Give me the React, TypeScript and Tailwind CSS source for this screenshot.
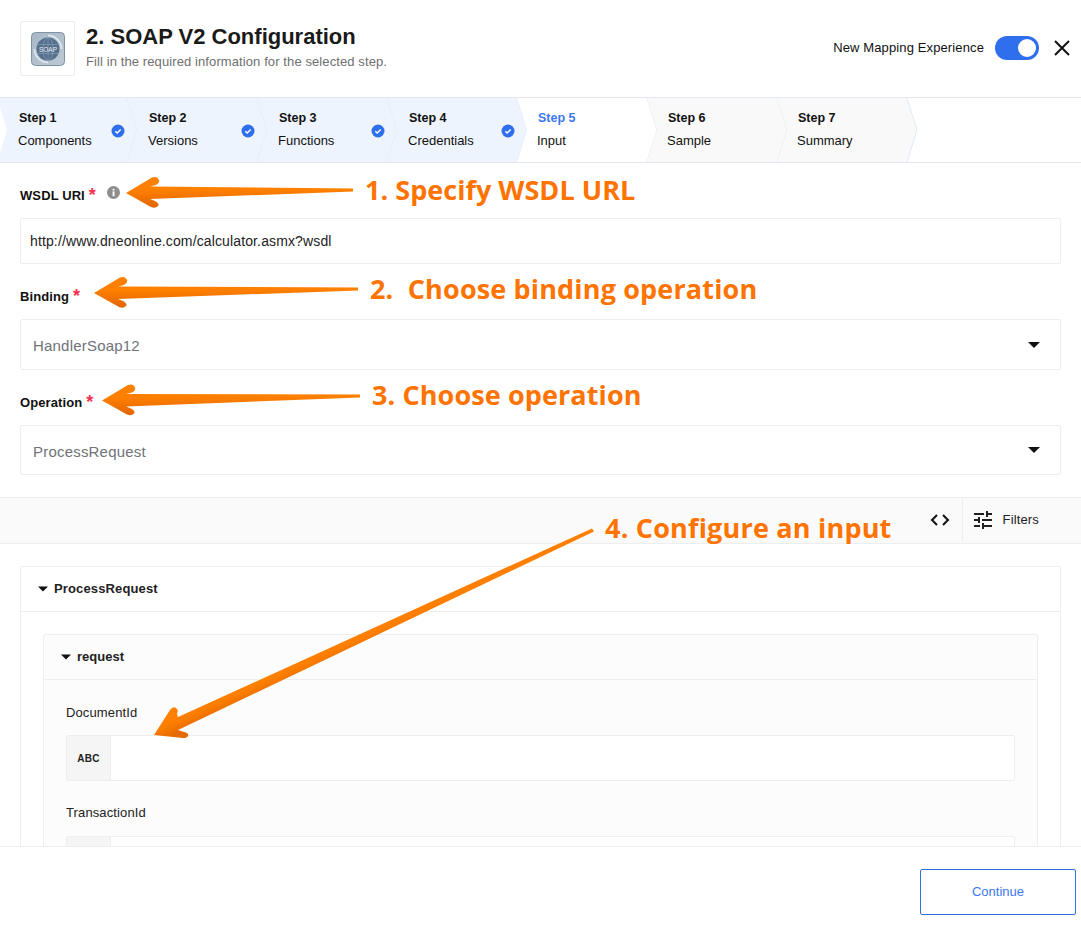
import { MdTune } from "react-icons/md";

const steps = [
  { n: "Step 1", name: "Components", state: "done" },
  { n: "Step 2", name: "Versions", state: "done" },
  { n: "Step 3", name: "Functions", state: "done" },
  { n: "Step 4", name: "Credentials", state: "done" },
  { n: "Step 5", name: "Input", state: "current" },
  { n: "Step 6", name: "Sample", state: "todo" },
  { n: "Step 7", name: "Summary", state: "todo" },
];

const stepFill: Record<string, string> = { done: "#eef4fd", current: "#ffffff", todo: "#f9f9f9" };

function Caret({ className }: { className?: string }) {
  return (
    <svg width="10" height="6" viewBox="0 0 10 6" className={className}>
      <path d="M0 0.5h10L5 5.5z" fill="#111" />
    </svg>
  );
}

function Star() {
  return <span className="text-[#f5304f] text-[18px] leading-none ml-[4px] font-bold relative top-[-1px]">*</span>;
}

function SoapLogo() {
  return (
    <svg width="34" height="34" viewBox="0 0 34 34">
      <defs>
        <linearGradient id="soapbg" x1="0" y1="0" x2="1" y2="1">
          <stop offset="0" stopColor="#a9b8c6" />
          <stop offset="1" stopColor="#bcc9d4" />
        </linearGradient>
      </defs>
      <rect x="0.5" y="0.5" width="33" height="33" rx="4" fill="url(#soapbg)" stroke="#7f92a5" />
      <path d="M17 3.5a13.5 13.5 0 0 1 13.5 13.5M17 30.5A13.5 13.5 0 0 1 3.5 17" fill="none" stroke="#e6ecf1" strokeWidth="1.5" />
      <circle cx="17" cy="17" r="11.5" fill="#556f8d" />
      <g fill="none" stroke="#86a0b8" strokeWidth="0.7">
        <ellipse cx="17" cy="17" rx="5" ry="11.5" />
        <path d="M17 5.5v23M6 12.5h22M6 21.5h22" />
      </g>
      <text x="17" y="19.5" textAnchor="middle" fontSize="6.5" fill="#e8edf2" fontFamily="Liberation Sans, sans-serif">SOAP</text>
    </svg>
  );
}

// left-pointing callout arrow, rounded barbs, shaft tapers to a blunt tail
function arrowPath(tx: number, ty: number, ex: number, ey: number) {
  return `M${tx} ${ty} L${tx + 26} ${ty - 15.5} Q${tx + 31} ${ty - 17.5} ${tx + 33} ${ty - 13} Q${tx + 34} ${ty - 10} ${tx + 30} ${ty - 8} L${tx + 24} ${ty - 6.5} L${ex} ${ey - 1.5} L${ex} ${ey + 1.5} L${tx + 24} ${ty + 6} L${tx + 29} ${ty + 8} Q${tx + 34} ${ty + 11} ${tx + 32} ${ty + 13} Q${tx + 29} ${ty + 16} ${tx + 25} ${ty + 14} Z`;
}

function Annotations() {
  return (
    <>
      <svg className="absolute left-0 top-0 pointer-events-none" width="1081" height="934" viewBox="0 0 1081 934">
        <defs>
          <linearGradient id="arrowFill" x1="0" y1="0" x2="0" y2="1">
            <stop offset="0.4" stopColor="#ff8000" />
            <stop offset="1" stopColor="#e06500" />
          </linearGradient>
          <linearGradient id="arrowFillDiag" gradientUnits="userSpaceOnUse" x1="174" y1="714" x2="182" y2="732">
            <stop offset="0.3" stopColor="#ff8000" />
            <stop offset="1" stopColor="#e56a00" />
          </linearGradient>
        </defs>
        <path d={arrowPath(126, 193, 353, 190)} fill="url(#arrowFill)" />
        <path d={arrowPath(94, 293, 358, 289)} fill="url(#arrowFill)" />
        <path d={arrowPath(102, 400.5, 360, 396)} fill="url(#arrowFill)" />
        <path
          d="M154 735 L170 710 Q173 706 176 708 Q179 710 177 714 L178 717 L592 528.5 L594 531.5 L178 730 L184 732 Q189 733 188 736 Q187 738 183 738 Z"
          fill="url(#arrowFillDiag)"
        />
      </svg>
      <div className="absolute left-[365px] top-[171px] text-[27px] leading-[38px] font-bold tracking-[0.03px] text-[#ff7300] [font-family:'Open_Sans',sans-serif] whitespace-nowrap">1. Specify WSDL URL</div>
      <div className="absolute left-[370px] top-[270px] text-[27px] leading-[38px] font-bold tracking-[0.15px] text-[#ff7300] [font-family:'Open_Sans',sans-serif] whitespace-pre">2.  Choose binding operation</div>
      <div className="absolute left-[372px] top-[376px] text-[27px] leading-[38px] font-bold tracking-[0.1px] text-[#ff7300] [font-family:'Open_Sans',sans-serif] whitespace-nowrap">3. Choose operation</div>
      <div className="absolute left-[605px] top-[509px] text-[27px] leading-[38px] font-bold tracking-[0.2px] text-[#ff7300] [font-family:'Open_Sans',sans-serif] whitespace-nowrap">4. Configure an input</div>
    </>
  );
}

function SelectBox({ value, className }: { value: string; className: string }) {
  return (
    <div className={`mx-5 border border-[#eeeeee] rounded-[2px] flex items-center justify-between pl-[12px] pr-[20px] text-[15px] tracking-[0.2px] text-[#6f7378] ${className}`}>
      <span className="mt-[4px]">{value}</span>
      <svg width="12" height="6" viewBox="0 0 12 6">
        <path d="M0 0h12L6 6z" fill="#111" />
      </svg>
    </div>
  );
}

function AbcField({ tag }: { tag?: string }) {
  return (
    <div className="h-[46px] shrink-0 flex border border-[#eeeeee] rounded-[2px] bg-white">
      <div className="w-[44px] bg-[#f5f5f5] border-r border-[#eeeeee] flex items-center justify-center text-[10px] font-bold tracking-[0.2px] text-[#222]">{tag}</div>
    </div>
  );
}

export default function App() {
  return (
    <div className="relative w-[1081px] h-[934px] overflow-hidden bg-white flex flex-col text-[#111] [font-family:'Liberation_Sans',Arial,sans-serif]">
      <header className="h-[97px] shrink-0 flex justify-between pl-5 pr-[11px] pt-[21px]">
        <div className="flex gap-[11px]">
          <div className="w-[55px] h-[55px] border border-[#eeeeee] rounded-[2px] flex items-center justify-center">
            <SoapLogo />
          </div>
          <div>
            <h1 className="text-[22px] leading-[30px] font-bold mt-[1px] text-[#1a1a1a]">2. SOAP V2 Configuration</h1>
            <p className="text-[13px] tracking-[0.1px] leading-[16px] mt-[2px] text-[#6f6f6f]">Fill in the required information for the selected step.</p>
          </div>
        </div>
        <div className="flex items-center h-[54px] self-start">
          <span className="text-[13px] tracking-[0.12px] mr-[11px]">New Mapping Experience</span>
          <div className="w-[44px] h-[24px] rounded-full bg-[#2f6fed] flex items-center justify-end pr-[3px] mr-[15px]">
            <div className="w-[18px] h-[18px] rounded-full bg-white" />
          </div>
          <svg width="16" height="16" viewBox="0 0 16 16">
            <path d="M1 1l14 14M15 1L1 15" stroke="#111" strokeWidth="2" />
          </svg>
        </div>
      </header>

      <nav className="h-[66px] shrink-0 border-y border-[#e3e8f0] flex pl-0 ml-[-3px]">
        {steps.map((s, i) => (
          <div key={s.n} className="relative w-[130px] h-[64px] shrink-0">
            <svg className="absolute left-0 top-0" width="141" height="64" viewBox="0 0 141 64">
              <path d="M0 0H130L140 32L130 64H0L10 32Z" fill={stepFill[s.state]} />
              <path d="M130 0L140 32L130 64" fill="none" stroke="#e1e8f5" />
            </svg>
            <div className={`absolute top-[12px] text-[13px] leading-[16px] ${i >= 4 ? "left-[20px]" : "left-[21px]"}`}>
              <div className={`ml-[1px] font-bold text-[12.5px] ${s.state === "current" ? "text-[#3b78f0]" : "text-[#111]"}`}>{s.n}</div>
              <div className="mt-[7px] text-[#111]">{s.name}</div>
            </div>
            {s.state === "done" && (
              <svg className="absolute left-[114px] top-[26px]" width="14" height="14" viewBox="0 0 14 14">
                <circle cx="7" cy="7" r="6.5" fill="#2f6fed" />
                <path d="M4.3 7.2l1.9 1.8 3.5-3.6" fill="none" stroke="#fff" strokeWidth="1.4" />
              </svg>
            )}
          </div>
        ))}
      </nav>

      <main className="flex-1 min-h-0 overflow-hidden flex flex-col">
        <div className="h-[55px] shrink-0 mx-5 flex items-end pb-[13px] text-[13px] tracking-[0.1px] leading-[18px] font-bold">
          WSDL URI
          <Star />
          <svg className="ml-[11px] mb-[6px]" width="13" height="13" viewBox="0 0 13 13">
            <circle cx="6.5" cy="6.5" r="6.5" fill="#8d8d8d" />
            <rect x="5.6" y="5.4" width="1.9" height="4.8" fill="#fff" />
            <rect x="5.6" y="2.8" width="1.9" height="1.7" fill="#fff" />
          </svg>
        </div>
        <div className="mx-5 h-[46px] shrink-0 border border-[#eeeeee] rounded-[2px] flex items-center pl-[9px] text-[14px] tracking-[0.13px] text-[#222]">
          http://www.dneonline.com/calculator.asmx?wsdl
        </div>
        <div className="h-[55px] shrink-0 mx-5 flex items-end pb-[13px] text-[13px] tracking-[0.1px] leading-[18px] font-bold">
          Binding
          <Star />
        </div>
        <SelectBox value="HandlerSoap12" className="h-[51px] shrink-0" />
        <div className="h-[55px] shrink-0 mx-5 flex items-end pb-[13px] text-[13px] tracking-[0.1px] leading-[18px] font-bold">
          Operation
          <Star />
        </div>
        <SelectBox value="ProcessRequest" className="h-[50px] shrink-0" />

        <div className="mt-[22px] h-[47px] shrink-0 bg-[#fafafa] border-y border-[#eeeeee] flex items-center justify-end pb-[1px]">
          <svg className="mr-[12px]" width="20" height="14" viewBox="0 0 20 14">
            <path d="M7 2L2 7l5 5M13 2l5 5-5 5" fill="none" stroke="#111" strokeWidth="2" />
          </svg>
          <div className="h-full w-[42px] border-l border-[#eeeeee] flex items-center justify-center">
            <MdTune size={24} color="#222" />
          </div>
          <span className="text-[13px] tracking-[0.15px] mr-[42px] ml-[-1px] text-[#222]">Filters</span>
        </div>

        <section className="mt-[22px] mx-5 border border-[#eeeeee] rounded-[2px] shrink-0 flex flex-col">
          <div className="h-[45px] shrink-0 border-b border-[#eeeeee] flex items-center pl-[17px] text-[13px] tracking-[0.13px] font-bold text-[#222]">
            <Caret className="mr-[6px]" />
            ProcessRequest
          </div>
          <div className="mt-[22px] mx-[22px] mb-[22px] border border-[#eeeeee] rounded-[2px] bg-[#fcfcfc] flex flex-col">
            <div className="h-[45px] shrink-0 border-b border-[#eeeeee] flex items-center pl-[17px] text-[13px] font-bold text-[#222]">
              <Caret className="mr-[6px]" />
              request
            </div>
            <div className="px-[22px] pb-[24px] flex flex-col">
              <div className="mt-[25px] mb-[14px] text-[13px] tracking-[0.12px] leading-[16px] text-[#222]">DocumentId</div>
              <AbcField tag="ABC" />
              <div className="mt-[24px] mb-[15px] text-[13px] tracking-[0.12px] leading-[16px] text-[#222]">TransactionId</div>
              <AbcField />
            </div>
          </div>
        </section>
      </main>

      <footer className="h-[88px] shrink-0 border-t border-[#eeeeee] bg-white flex justify-end pt-[22px] pr-[5px]">
        <button className="w-[156px] h-[46px] border border-[#2f6fed] rounded-[2px] text-[13px] text-[#3b78f0]">Continue</button>
      </footer>

      <Annotations />
    </div>
  );
}
